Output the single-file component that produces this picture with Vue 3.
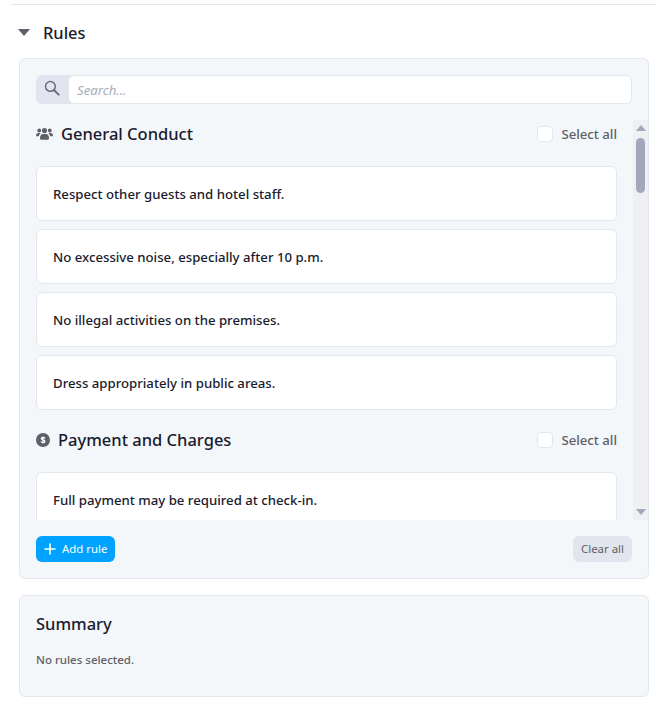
<script setup>
const sections = [
  {
    title: 'General Conduct',
    icon: 'users',
    rules: [
      'Respect other guests and hotel staff.',
      'No excessive noise, especially after 10 p.m.',
      'No illegal activities on the premises.',
      'Dress appropriately in public areas.'
    ]
  },
  {
    title: 'Payment and Charges',
    icon: 'dollar',
    rules: ['Full payment may be required at check-in.']
  }
]
</script>

<template>
  <div class="page">
    <div class="top-line"></div>
    <div class="collapse-head">
      <span class="caret"></span>
      <h2>Rules</h2>
    </div>

    <div class="panel rules-panel">
      <div class="search">
        <span class="search-icon">
          <svg width="16" height="16" viewBox="0 0 16 16" fill="none" stroke="#6a6d7a" stroke-width="1.5">
            <circle cx="6.4" cy="6.4" r="4.9" />
            <path d="M10 10L14.6 14.6" stroke-linecap="round" stroke-width="2" />
          </svg>
        </span>
        <input class="search-input" placeholder="Search..." />
      </div>

      <div class="list-wrap">
        <div class="list">
          <section v-for="s in sections" :key="s.title" class="group">
            <div class="group-head">
              <svg v-if="s.icon === 'users'" class="ico-users" width="17" height="14" viewBox="0 0 18 14" fill="#5f6067">
                <circle cx="3.4" cy="3.3" r="2" />
                <circle cx="14.6" cy="3.3" r="2" />
                <circle cx="9" cy="3.4" r="2.7" />
                <path d="M0 9.4C0 7.2.9 6 2.6 6h1.3c.4 0 .8.1 1.1.3-1.1.7-1.8 1.8-1.9 3.1H0zM18 9.4c0-2.2-.9-3.4-2.6-3.4h-1.3c-.4 0-.8.1-1.1.3 1.1.7 1.8 1.8 1.9 3.1H18z" />
                <path d="M4.2 11.6c0-2.6 1.2-4.5 3.2-4.5h3.2c2 0 3.2 1.9 3.2 4.5 0 .9-.5 1.4-1.2 1.4H5.4c-.7 0-1.2-.5-1.2-1.4z" />
              </svg>
              <svg v-else class="ico-dollar" width="14" height="14" viewBox="0 0 14 14">
                <circle cx="7" cy="7" r="7" fill="#5f6067" />
                <path d="M9 5.4C8.7 4.8 8 4.4 7 4.4c-1.1 0-1.8.5-1.8 1.2 0 1.7 3.7.9 3.7 2.8 0 .8-.8 1.3-1.9 1.3-1.1 0-1.8-.4-2.1-1.1M7 3.4v7.2" fill="none" stroke="#fff" stroke-width="1.2" />
              </svg>
              <h3>{{ s.title }}</h3>
              <label class="select-all">
                <input type="checkbox" />
                <span>Select all</span>
              </label>
            </div>
            <div v-for="r in s.rules" :key="r" class="rule">{{ r }}</div>
          </section>
        </div>
        <div class="scrollbar">
          <span class="arrow up"></span>
          <span class="thumb"></span>
          <span class="arrow down"></span>
        </div>
      </div>

      <div class="actions">
        <button class="add-btn">
          <svg width="12" height="12" viewBox="0 0 12 12" stroke="#fff" stroke-width="1.6" stroke-linecap="round">
            <path d="M6 1v10M1 6h10" />
          </svg>
          <span>Add rule</span>
        </button>
        <button class="clear-btn"><span>Clear all</span></button>
      </div>
    </div>

    <div class="panel summary">
      <h3>Summary</h3>
      <p>No rules selected.</p>
    </div>
  </div>
</template>

<style>
html, body {
  background: #fff;
}
</style>

<style scoped>
.page {
  width: 668px;
  height: 717px;
  box-sizing: border-box;
  padding: 4px 19px 0;
  font-family: "Noto Sans", "Open Sans", sans-serif;
  color: #1a1b2e;
  overflow: hidden;
}

.top-line {
  height: 1px;
  background: #e6e8ee;
  margin: 0 -8px;
}

.collapse-head {
  display: flex;
  align-items: center;
  height: 53px;
  padding-top: 1px;
  box-sizing: border-box;
}

.caret {
  width: 0;
  height: 0;
  border-left: 6px solid transparent;
  border-right: 6px solid transparent;
  border-top: 7px solid #5f6067;
  margin: 0 12px 0 -1px;
}

h2 {
  margin: 0 0 0 1px;
  font-size: 16.4px;
  font-weight: 500;
}

.panel {
  background: #f4f7fa;
  border: 1px solid #e4e7ec;
  border-radius: 6px;
  box-sizing: border-box;
}

.rules-panel {
  height: 521px;
  padding: 16px 0 16px 16px;
}

.search {
  display: flex;
  height: 29px;
  margin-right: 16px;
}

.search-icon {
  width: 36px;
  margin-right: -4px;
  padding: 0 4px 3px 0;
  box-sizing: border-box;
  background: #e2e5ef;
  border-radius: 6px 0 0 6px;
  display: flex;
  align-items: center;
  justify-content: center;
  flex: none;
}

.search-input {
  position: relative;
  flex: 1;
  min-width: 0;
  box-sizing: border-box;
  border: 1px solid #e4e7ec;
  border-radius: 6px;
  background: #fff;
  padding: 0 8px;
  font: italic 13.2px "Noto Sans", sans-serif;
  outline: none;
}

.search-input::placeholder {
  color: #a9abb8;
}

.list-wrap {
  display: flex;
  height: 400px;
  margin-top: 16px;
}

.list {
  flex: 1;
  min-width: 0;
  overflow: hidden;
}

.group {
  margin-bottom: 16px;
}

.group-head {
  display: flex;
  align-items: center;
  height: 28px;
  margin-bottom: 18px;
}

.ico-users {
  margin-right: 8px;
}

.ico-dollar {
  margin-right: 8px;
}

h3 {
  margin: 0;
  font-size: 16.5px;
  font-weight: 500;
}

.group-head h3 {
  margin-top: -2px;
}

.select-all {
  margin-left: auto;
  display: flex;
  align-items: center;
  gap: 8px;
  font-size: 13.2px;
  font-weight: 500;
  color: #5f6067;
}

.select-all input {
  appearance: none;
  width: 16px;
  height: 16px;
  margin: 0;
  background: #fff;
  border: 1px solid #e4e7ec;
  border-radius: 4px;
}

.rule {
  height: 55px;
  box-sizing: border-box;
  display: flex;
  align-items: center;
  padding: 0 16px;
  margin-bottom: 8px;
  background: #fff;
  border: 1px solid #e4e7ec;
  border-radius: 6px;
  font-size: 13.2px;
  font-weight: 500;
}

.scrollbar {
  width: 15px;
  margin-left: 16px;
  flex: none;
  background: #eef0f4;
  display: flex;
  flex-direction: column;
  align-items: center;
}

.arrow {
  width: 0;
  height: 0;
  border-left: 5px solid transparent;
  border-right: 5px solid transparent;
}

.arrow.up {
  border-bottom: 6px solid #a4a6bb;
  margin: 5px 0 7px;
}

.arrow.down {
  border-top: 6px solid #a4a6bb;
  margin: auto 0 5px;
}

.thumb {
  width: 9px;
  height: 55px;
  border-radius: 5px;
  background: #a4a6bb;
}

.actions {
  display: flex;
  justify-content: space-between;
  margin: 16px 16px 0 0;
}

button {
  height: 26px;
  border: 0;
  border-radius: 6px;
  font-family: "Noto Sans", sans-serif;
  font-size: 11.4px;
  display: flex;
  align-items: center;
}

button span {
  margin-top: -2px;
}

.add-btn {
  width: 79px;
  padding: 0 0 0 8px;
  gap: 6px;
  background: #00a2ff;
  color: #fff;
}

.clear-btn {
  width: 59px;
  justify-content: center;
  padding: 0;
  background: #e2e5ee;
  color: #5f6067;
}

.summary {
  height: 102px;
  margin-top: 16px;
  padding: 16px;
}

.summary h3 {
  line-height: 24px;
}

.summary p {
  margin: 16px 0 0;
  font-size: 11.5px;
  font-weight: 500;
  color: #5f6067;
}
</style>
